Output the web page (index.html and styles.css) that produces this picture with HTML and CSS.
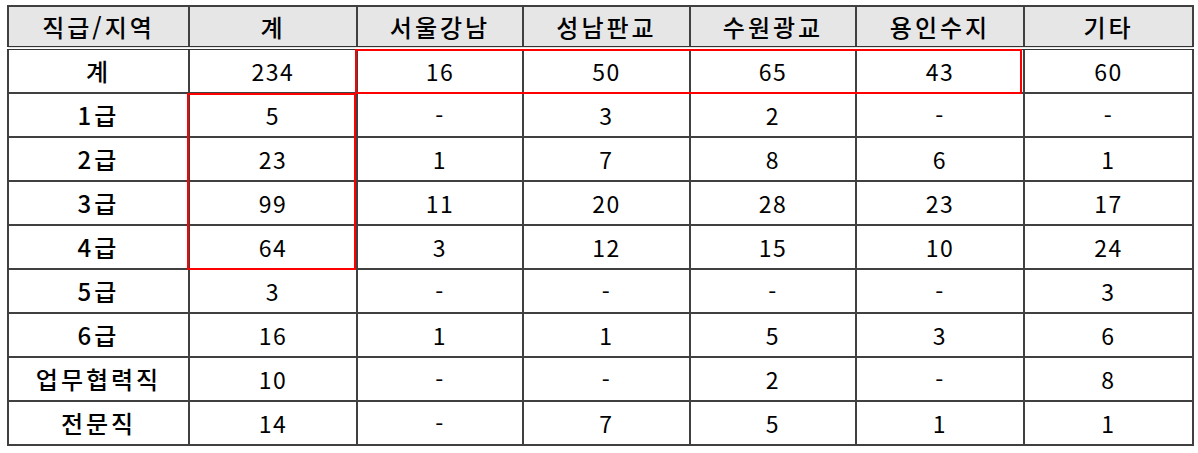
FILE: index.html
```html
<!DOCTYPE html>
<html lang="ko">
<head>
<meta charset="utf-8">
<title>직급/지역 현황</title>
<link rel="stylesheet" href="styles.css">
</head>
<body>
<div class="wrap">
  <table class="grid">
    <colgroup>
      <col class="c0"><col class="c1"><col class="c2"><col class="c3"><col class="c4"><col class="c5"><col class="c6">
    </colgroup>
    <thead>
      <tr><th>직급/지역</th><th>계</th><th>서울강남</th><th>성남판교</th><th>수원광교</th><th>용인수지</th><th>기타</th></tr>
    </thead>
    <tbody>
      <tr><th>계</th><td>234</td><td>16</td><td>50</td><td>65</td><td>43</td><td>60</td></tr>
      <tr><th>1급</th><td>5</td><td>-</td><td>3</td><td>2</td><td>-</td><td>-</td></tr>
      <tr><th>2급</th><td>23</td><td>1</td><td>7</td><td>8</td><td>6</td><td>1</td></tr>
      <tr><th>3급</th><td>99</td><td>11</td><td>20</td><td>28</td><td>23</td><td>17</td></tr>
      <tr><th>4급</th><td>64</td><td>3</td><td>12</td><td>15</td><td>10</td><td>24</td></tr>
      <tr><th>5급</th><td>3</td><td>-</td><td>-</td><td>-</td><td>-</td><td>3</td></tr>
      <tr><th>6급</th><td>16</td><td>1</td><td>1</td><td>5</td><td>3</td><td>6</td></tr>
      <tr><th>업무협력직</th><td>10</td><td>-</td><td>-</td><td>2</td><td>-</td><td>8</td></tr>
      <tr><th>전문직</th><td>14</td><td>-</td><td>7</td><td>5</td><td>1</td><td>1</td></tr>
    </tbody>
  </table>
  <div class="mark mark-row"></div>
  <div class="mark mark-col"></div>
</div>
</body>
</html>
```
FILE: styles.css
```css
html, body {
  margin: 0;
  padding: 0;
  background: #ffffff;
}
body {
  font-family: "Noto Sans CJK KR", "Noto Sans", sans-serif;
  color: #000000;
}
.wrap {
  position: relative;
  width: 1186px;
  margin: 5px 0 0 7px;
}
.grid {
  width: 1186px;
  table-layout: fixed;
  border-collapse: collapse;
  border-top: 1px solid #555555;
  border-left: 2px solid #333333;
  border-right: 2px solid #222222;
  border-bottom: 2px solid #222222;
}
.c0 { width: 181px; }
.c1 { width: 168px; }
.c2 { width: 166px; }
.c3 { width: 167px; }
.c4 { width: 166px; }
.c5 { width: 168px; }
.c6 { width: 169px; }
.grid th,
.grid td {
  height: 42px;
  padding: 0;
  border: 2px solid #404040;
  text-align: center;
  vertical-align: middle;
  font-size: 23px;
  font-weight: 400;
  letter-spacing: 1.5px;
  line-height: 1;
}
.grid th {
  font-size: 24px;
  font-weight: 500;
  letter-spacing: 3px;
}
.grid thead th {
  height: 39px;
  background: #e6e6e6;
  border-bottom: 4px double #333333;
}
.mark {
  position: absolute;
  border: 2px solid #ff0000;
  pointer-events: none;
}
.mark-row {
  left: 348px;
  top: 44px;
  width: 663px;
  height: 41px;
}
.mark-col {
  left: 180px;
  top: 88px;
  width: 165px;
  height: 173px;
}
```
